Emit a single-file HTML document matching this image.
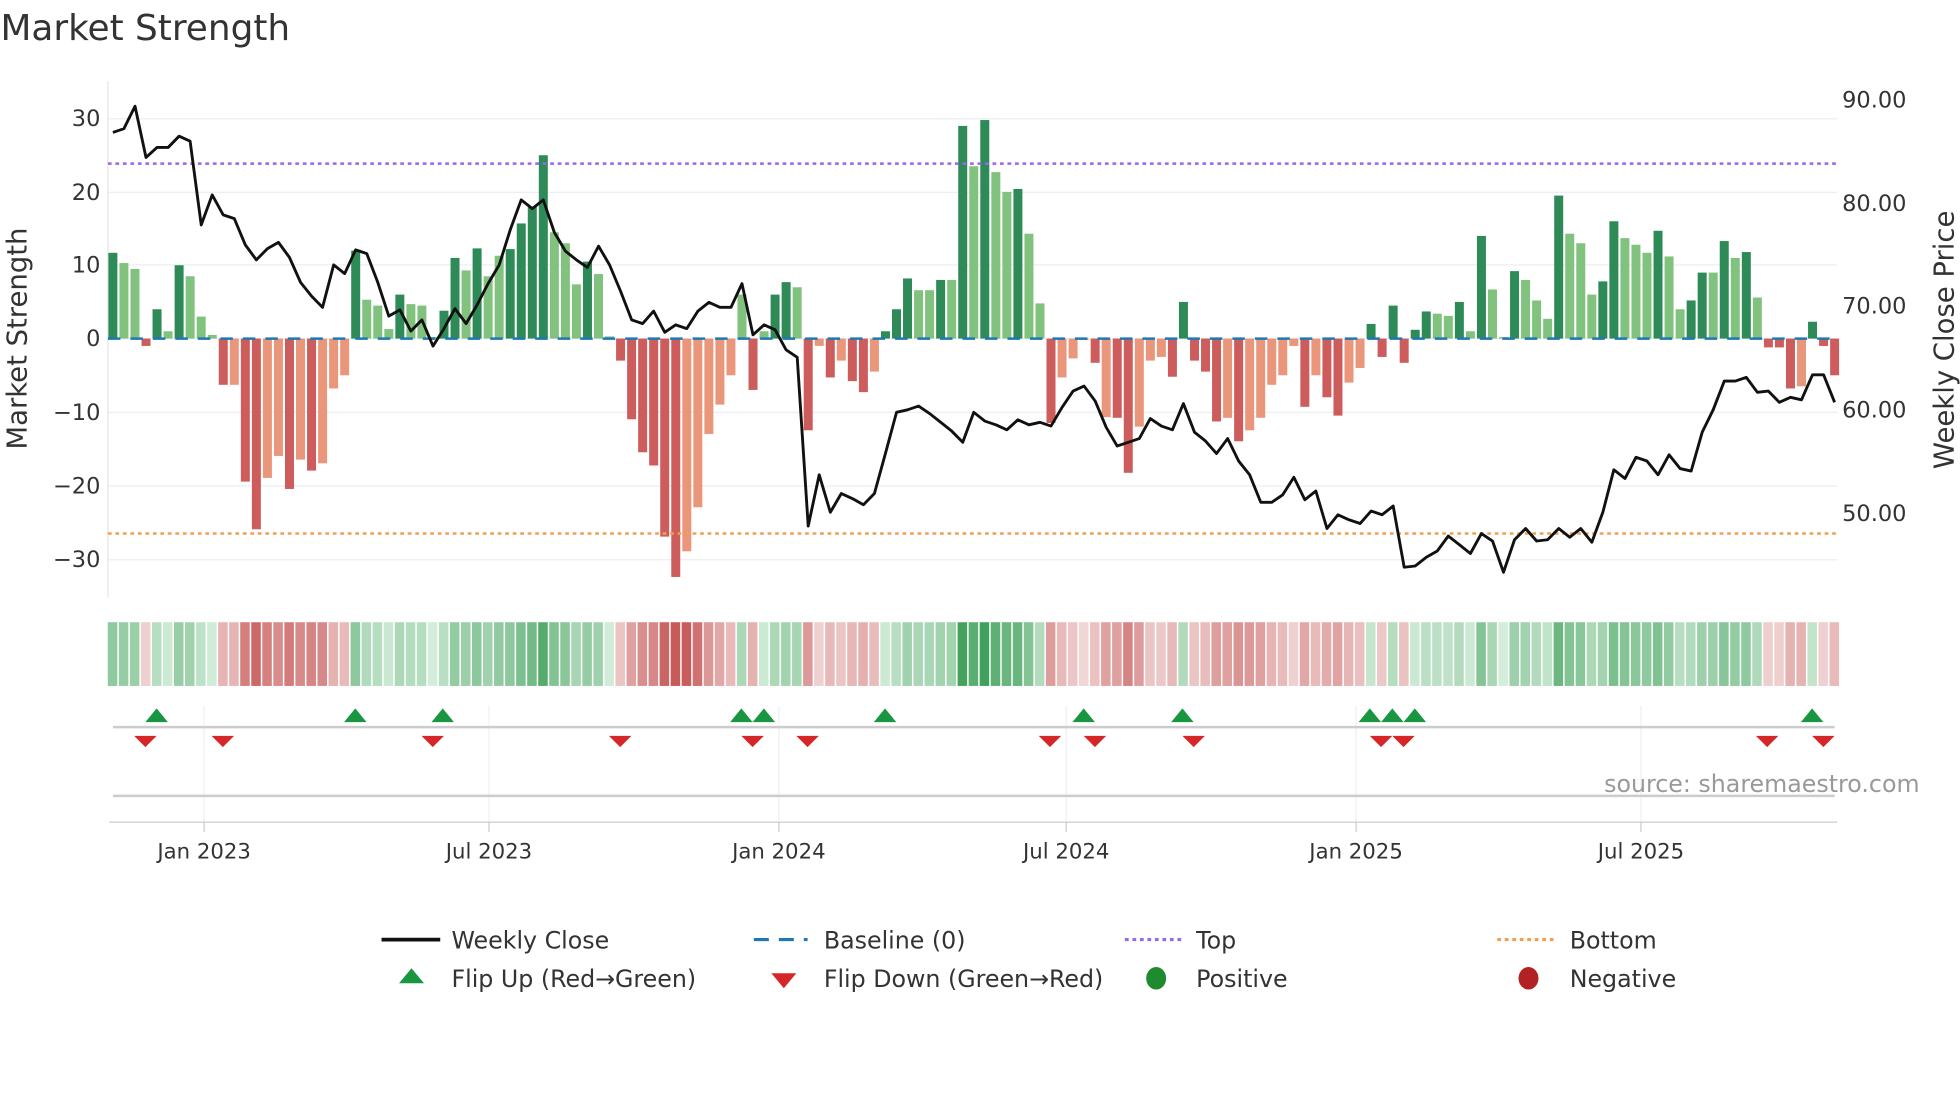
<!DOCTYPE html>
<html><head><meta charset="utf-8"><style>
html,body{margin:0;padding:0;background:#fff;width:1960px;height:1102px;overflow:hidden}
svg{display:block}
text{font-family:"DejaVu Sans","Liberation Sans",sans-serif;fill:#333}
</style></head><body>
<svg id="s" width="1960" height="1102" viewBox="0 0 1568 882" xmlns="http://www.w3.org/2000/svg">
<text x="0" y="32" font-size="28.7">Market Strength</text>
<g id="grid"></g>
<g id="heat"></g>
<g id="bars"></g>
<g id="lines"></g>
<g font-size="18" text-anchor="end">
<text x="80" y="101">30</text><text x="80" y="160">20</text><text x="80" y="218">10</text><text x="80" y="277">0</text>
<text x="80" y="336">−10</text><text x="80" y="395">−20</text><text x="80" y="454">−30</text>
</g>
<g font-size="18">
<text x="1474" y="86">90.00</text><text x="1474" y="169">80.00</text><text x="1474" y="251">70.00</text><text x="1474" y="334">60.00</text><text x="1474" y="417">50.00</text>
</g>
<text font-size="22" transform="translate(21,271) rotate(-90)" text-anchor="middle">Market Strength</text>
<text font-size="22" transform="translate(1563,272) rotate(-90)" text-anchor="middle">Weekly Close Price</text>
<g font-size="17" text-anchor="middle">
<text x="163" y="687">Jan 2023</text><text x="391" y="687">Jul 2023</text><text x="623" y="687">Jan 2024</text>
<text x="853" y="687">Jul 2024</text><text x="1085" y="687">Jan 2025</text><text x="1313" y="687">Jul 2025</text>
</g>
<text x="1536" y="634" font-size="19" text-anchor="end" style="fill:#999">source: sharemaestro.com</text>
<g font-size="19">
<line x1="305" y1="752" x2="352" y2="752" stroke="#111" stroke-width="3"/><text x="361" y="759">Weekly Close</text>
<line x1="603" y1="752" x2="646" y2="752" stroke="#1f77b4" stroke-width="2.5" stroke-dasharray="12,8"/><text x="659" y="759">Baseline (0)</text>
<line x1="900" y1="752" x2="945" y2="752" stroke="#9966ee" stroke-width="2.5" stroke-dasharray="3,3"/><text x="957" y="759">Top</text>
<line x1="1198" y1="752" x2="1243" y2="752" stroke="#f0a050" stroke-width="2.5" stroke-dasharray="3,3"/><text x="1256" y="759">Bottom</text>
<polygon points="319,787 329,775 339,787" fill="#1a9641"/><text x="361" y="790">Flip Up (Red→Green)</text>
<polygon points="617,779 637,779 627,791" fill="#d62728"/><text x="659" y="790">Flip Down (Green→Red)</text>
<ellipse cx="925" cy="783" rx="8" ry="9" fill="#1e8c2e"/><text x="957" y="790">Positive</text>
<ellipse cx="1223" cy="783" rx="8" ry="9" fill="#b22222"/><text x="1256" y="790">Negative</text>
</g>
</svg>
<script>
var NS="http://www.w3.org/2000/svg";
function el(p,t,a){var e=document.createElementNS(NS,t);for(var k in a)e.setAttribute(k,a[k]);document.getElementById(p).appendChild(e);return e;}
[95,154,212,271,330,389,448].forEach(function(y){el("grid","line",{x1:86,x2:1470,y1:y,y2:y,stroke:"#eceef2","stroke-width":1});});
el("grid","line",{x1:86,x2:86,y1:65,y2:478,stroke:"#e6e6e6","stroke-width":1});
[163,391,623,853,1085,1313].forEach(function(x){el("grid","line",{x1:x,x2:x,y1:565,y2:658,stroke:"#eef0f4","stroke-width":1});el("grid","line",{x1:x,x2:x,y1:658,y2:666,stroke:"#ccc","stroke-width":1});});
el("grid","line",{x1:90,x2:1468,y1:582,y2:582,stroke:"#ccc","stroke-width":2});
el("grid","line",{x1:90,x2:1468,y1:637,y2:637,stroke:"#ccc","stroke-width":2});
el("grid","line",{x1:87,x2:1470,y1:658,y2:658,stroke:"#ccc","stroke-width":1});
var B=[[11.7,1],[10.3,0],[9.5,0],[-1,1],[4,1],[1,0],[10,1],[8.5,0],[3,0],[0.5,0],[-6.3,1],[-6.3,0],[-19.5,1],[-26,1],[-19,0],[-16,0],[-20.5,1],[-16.5,0],[-18,1],[-17,0],[-6.8,0],[-5,0],[12,1],[5.3,0],[4.5,0],[1.3,0],[6,1],[4.7,0],[4.5,0],[0.2,0],[3.8,1],[11,1],[9.3,0],[12.3,1],[8.5,0],[11.3,0],[12.2,1],[15.7,1],[18,1],[25,1],[14.5,0],[13,0],[7.4,0],[10.5,1],[8.8,0],[0.3,0],[-3,1],[-11,1],[-15.5,1],[-17.3,1],[-27,1],[-32.5,1],[-29,0],[-23,0],[-13,0],[-9,0],[-5,0],[6,0],[-7,1],[1,0],[6,1],[7.7,1],[7,0],[-12.5,1],[-1,0],[-5.3,1],[-3,0],[-5.8,1],[-7.3,1],[-4.5,0],[1,1],[4,1],[8.2,1],[6.6,0],[6.6,0],[8,1],[8,0],[29,1],[23.5,0],[29.8,1],[22.7,0],[20,0],[20.4,1],[14.3,0],[4.8,0],[-11.5,1],[-5.3,0],[-2.7,0],[-0.2,0],[-3.3,1],[-10.7,0],[-10.8,1],[-18.3,1],[-12,0],[-3,0],[-2.5,0],[-5.2,1],[5,1],[-3,1],[-4.5,1],[-11.3,1],[-10.8,0],[-14,1],[-12.5,0],[-10.8,0],[-6.3,0],[-5,0],[-1,0],[-9.3,1],[-5,0],[-8,1],[-10.5,1],[-6,0],[-4,0],[2,1],[-2.5,1],[4.5,1],[-3.3,1],[1.2,1],[3.7,1],[3.4,0],[3.1,0],[5,1],[1,0],[14,1],[6.7,0],[0.2,0],[9.2,1],[8,0],[5.2,0],[2.7,0],[19.5,1],[14.3,0],[13,0],[6,0],[7.8,1],[16,1],[13.7,0],[12.8,0],[11.7,0],[14.7,1],[11.2,0],[4,0],[5.2,1],[9,1],[9,0],[13.3,1],[11,0],[11.8,1],[5.6,0],[-1.2,1],[-1.2,1],[-6.8,1],[-6.5,0],[2.3,1],[-1,1],[-5,1]];
var n=B.length,dx=(1468-90)/(n-1);
function mix(a,b,t){return "rgb("+a.map(function(v,i){return Math.round(v+(b[i]-v)*t)}).join(",")+")";}
B.forEach(function(b,i){
 var x=90+i*dx,v=b[0],h=Math.abs(v)*5.87,y=v>=0?271-h:271;
 var c=v>=0?(b[1]?"#2e8b57":"#82c27f"):(b[1]?"#cd5c5c":"#e9967a");
 el("bars","rect",{x:x-3.6,y:y,width:7.2,height:Math.max(h,0.5),fill:c});
 var t=Math.min(Math.abs(v)/30,1);
 var hc=v>=0?mix([214,238,220],[64,160,90],Math.pow(t,0.8)):mix([242,216,216],[200,90,90],Math.pow(t,0.8));
 el("heat","rect",{x:x-4.1,y:498,width:dx-1.2,height:51,fill:hc});
});
el("lines","line",{x1:86,x2:1470,y1:271,y2:271,stroke:"#1f77b4","stroke-width":2,"stroke-dasharray":"10,8"});
el("lines","line",{x1:86,x2:1470,y1:131,y2:131,stroke:"#9966ee","stroke-width":2,"stroke-dasharray":"3,3"});
el("lines","line",{x1:86,x2:1470,y1:427,y2:427,stroke:"#f0a050","stroke-width":2,"stroke-dasharray":"3,3"});
var P=[106,103,85,126,118,118,109,113,180,156,172,175,196,208,199,194,206,226,237,246,212,219,200,203,226,253,248,265,256,277,263,247,259,244,227,212,184,160,167,160,186,201,208,214,197,212,233,256,259,249,266,260,263,249,242,246,246,227,268,260,264,280,286,421,380,410,395,399,404,395,363,330,328,325,331,338,345,354,330,337,340,344,336,340,338,341,326,313,309,321,342,357,354,351,335,341,344,323,346,353,363,351,369,380,402,402,396,382,400,393,423,412,416,419,409,412,405,454,453,446,441,429,436,443,427,433,458,432,423,433,432,423,430,423,434,410,376,383,366,369,380,364,375,377,346,328,305,305,302,314,313,322,318,320,300,300,322];
var pd=P.map(function(y,i){return (i?"L":"M")+(90+i*(1378/(P.length-1))).toFixed(1)+","+y}).join("");
el("lines","path",{d:pd,fill:"none",stroke:"#111","stroke-width":2.3,"stroke-linejoin":"round"});
[125,284,354,593,611,708,867,946,1096,1114,1132,1450].forEach(function(x){el("lines","polygon",{points:(x-9)+",578 "+x+",567 "+(x+9)+",578",fill:"#1a9641"});});
[116,178,346,496,602,646,840,876,955,1105,1123,1414,1459].forEach(function(x){el("lines","polygon",{points:(x-9)+",589 "+(x+9)+",589 "+x+",598",fill:"#d62728"});});
</script>
</body></html>
